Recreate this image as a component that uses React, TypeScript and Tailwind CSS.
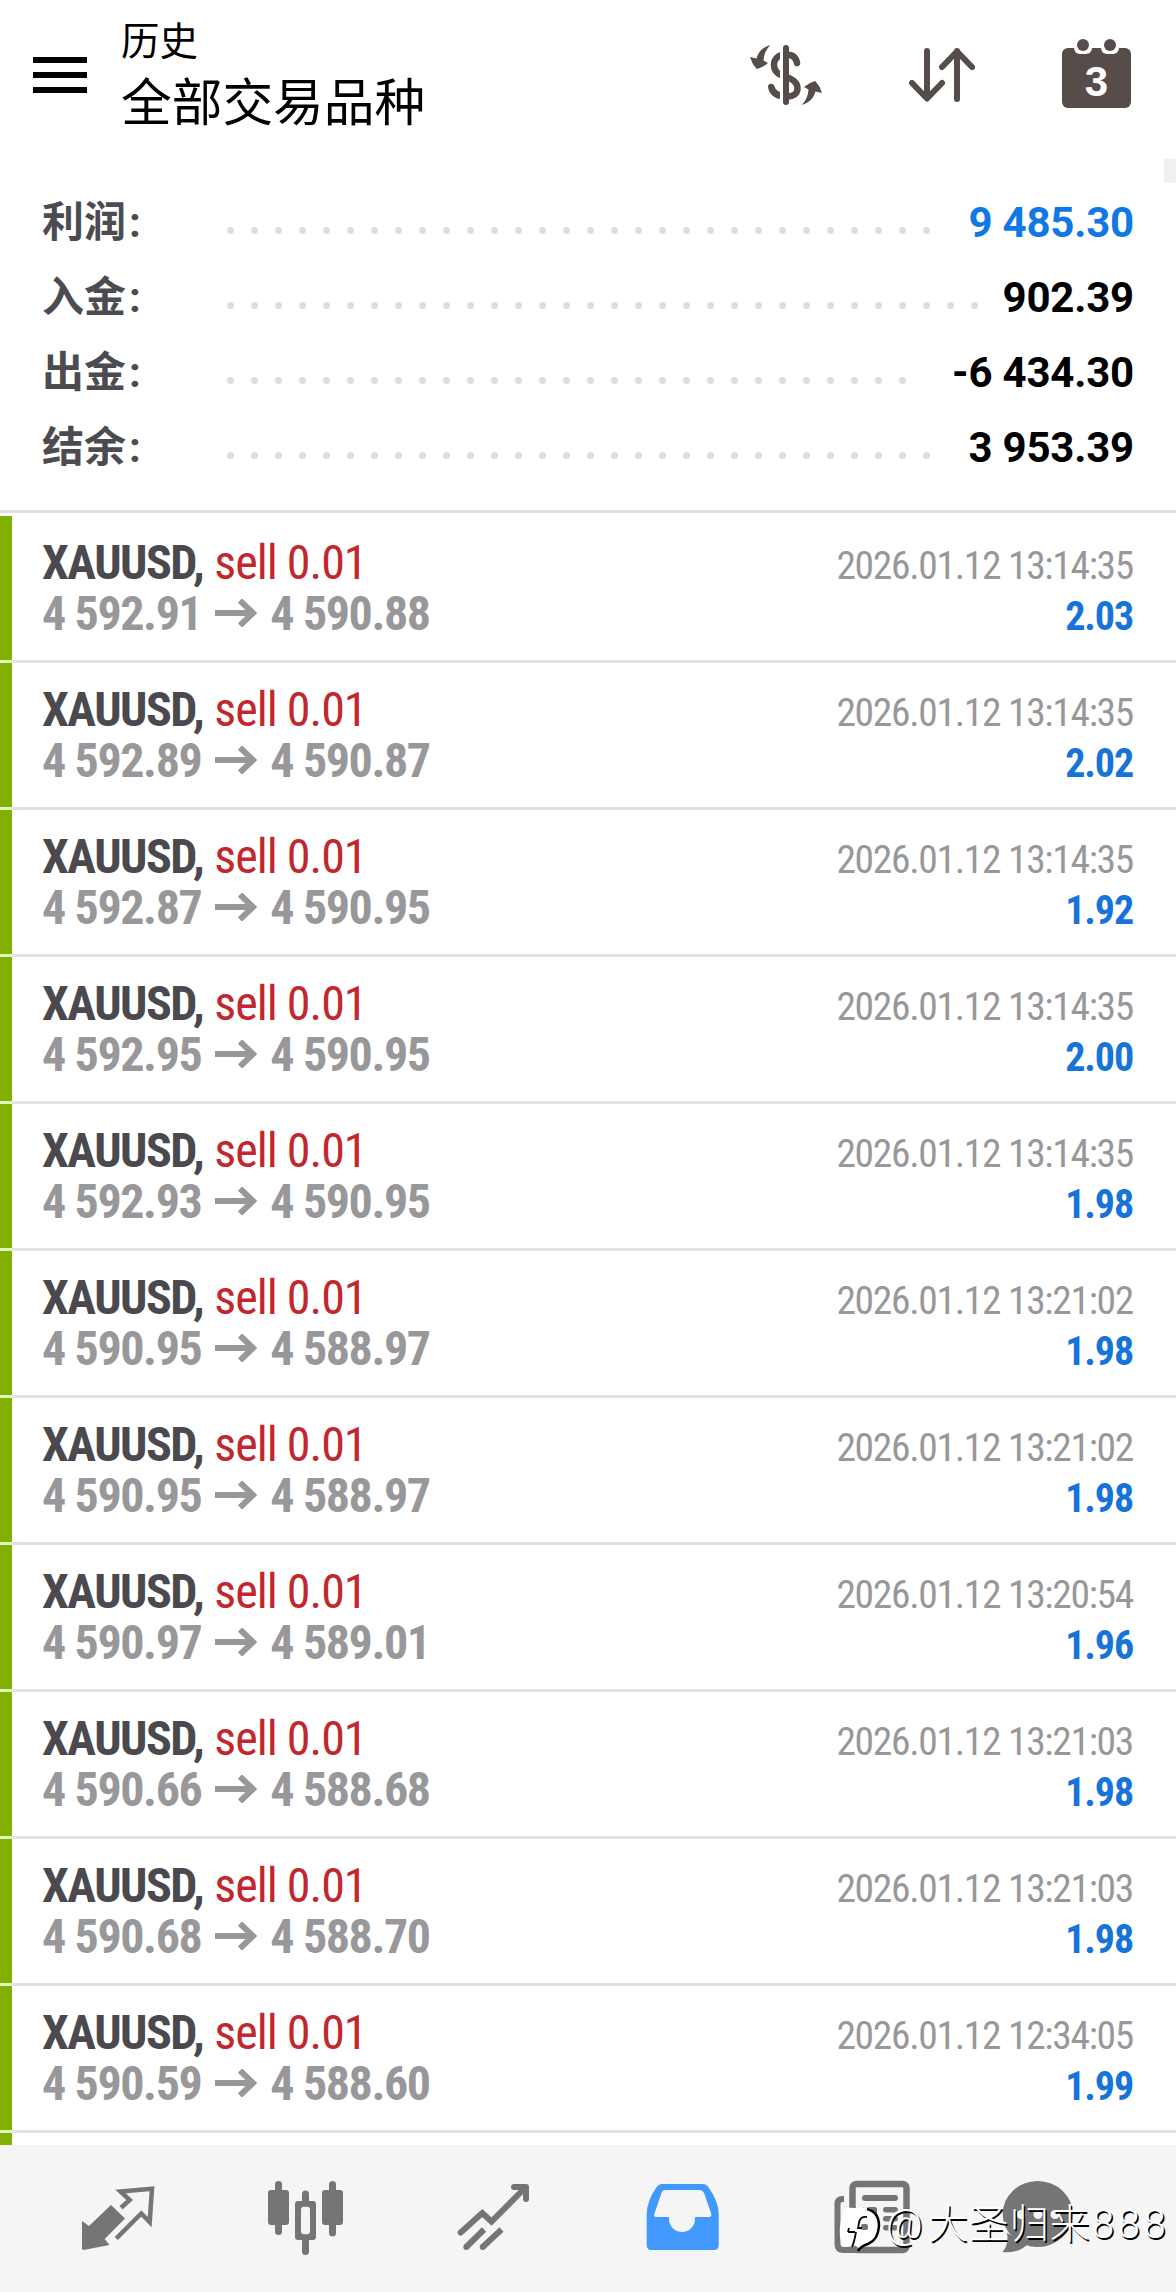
import type { ReactNode } from 'react';

interface Deal {
  open: string;
  close: string;
  time: string;
  profit: string;
}

interface SummaryItem {
  label: string;
  value: string;
  dots: number;
  valueClass: string;
}

const summary: SummaryItem[] = [
  { label: '利润', value: '9 485.30', dots: 30, valueClass: 'text-[#0f78e4]' },
  { label: '入金', value: '902.39', dots: 32, valueClass: 'text-black' },
  { label: '出金', value: '-6 434.30', dots: 29, valueClass: 'text-black' },
  { label: '结余', value: '3 953.39', dots: 30, valueClass: 'text-black' }
];

const deals: Deal[] = [
  { open: '4 592.91', close: '4 590.88', time: '2026.01.12 13:14:35', profit: '2.03' },
  { open: '4 592.89', close: '4 590.87', time: '2026.01.12 13:14:35', profit: '2.02' },
  { open: '4 592.87', close: '4 590.95', time: '2026.01.12 13:14:35', profit: '1.92' },
  { open: '4 592.95', close: '4 590.95', time: '2026.01.12 13:14:35', profit: '2.00' },
  { open: '4 592.93', close: '4 590.95', time: '2026.01.12 13:14:35', profit: '1.98' },
  { open: '4 590.95', close: '4 588.97', time: '2026.01.12 13:21:02', profit: '1.98' },
  { open: '4 590.95', close: '4 588.97', time: '2026.01.12 13:21:02', profit: '1.98' },
  { open: '4 590.97', close: '4 589.01', time: '2026.01.12 13:20:54', profit: '1.96' },
  { open: '4 590.66', close: '4 588.68', time: '2026.01.12 13:21:03', profit: '1.98' },
  { open: '4 590.68', close: '4 588.70', time: '2026.01.12 13:21:03', profit: '1.98' },
  { open: '4 590.59', close: '4 588.60', time: '2026.01.12 12:34:05', profit: '1.99' }
];

const CurrencyIcon = () => (
  <svg width="72" height="60" viewBox="0 0 72 60" fill="#564c49">
    <path
      d="M47 18C46 12 42 9.5 36 9.5C28 9.5 24 14 24 20C24 27 29 29.5 36 32C43 34 47.5 37 47.5 43.5C47.5 48 44 51.5 37 51.5C27 51.5 22.5 48 21.3 42"
      fill="none"
      stroke="#564c49"
      strokeWidth="6.5"
      strokeLinecap="round"
    />
    <rect x="30" y="2" width="5" height="56" fill="#fff" />
    <rect x="33" y="0" width="6" height="60" rx="3" />
    <path d="M20.5 0Q9 3 6.5 13.5L0 12Q2 19 6.7 24Q13 22.5 18 18L13.5 15.5Q14 6 20.5 0Z" />
    <path
      d="M20.5 0Q9 3 6.5 13.5L0 12Q2 19 6.7 24Q13 22.5 18 18L13.5 15.5Q14 6 20.5 0Z"
      transform="rotate(180 36 30)"
    />
  </svg>
);

const SortIcon = () => (
  <svg width="66" height="54" viewBox="0 0 66 54" fill="none" stroke="#564c49" strokeWidth="6" strokeLinecap="round" strokeLinejoin="round">
    <path d="M18 3V50M3 35L18 50.5L33 35" />
    <path d="M48 51V3M33 19L48 3.5L63 19" />
  </svg>
);

const CalendarIcon = () => (
  <svg width="69" height="69" viewBox="0 0 69 69" fill="#564c49">
    <rect y="9" width="69" height="60" rx="6" />
    <rect x="12" y="-3" width="18" height="18" rx="6" fill="#fff" />
    <rect x="39" y="-3" width="18" height="18" rx="6" fill="#fff" />
    <circle cx="21" cy="6" r="6" />
    <circle cx="48" cy="6" r="6" />
    <text x="34.5" y="57" textAnchor="middle" fill="#fff" fontSize="42" fontWeight="700" fontFamily="Liberation Sans, sans-serif">
      3
    </text>
  </svg>
);

const NavIcon = ({ children }: { children: ReactNode }) => (
  <button className="flex w-[188px] items-center justify-center">
    <svg width="100" height="101" viewBox="0 0 100 101" fill="#757575" className="overflow-visible">
      {children}
    </svg>
  </button>
);

const Header = () => (
  <header className="flex h-[159px] items-start pl-[33px] pr-[45px]">
    <button className="mt-[57px] flex w-[54px] flex-col gap-[9px]">
      <span className="h-[6px] w-full bg-black" />
      <span className="h-[6px] w-full bg-black" />
      <span className="h-[6px] w-full bg-black" />
    </button>
    <div className="ml-[34px] flex-1 pt-[15px] text-black">
      <p className="text-[38.5px] leading-[54px]">历史</p>
      <h1 className="pt-px text-[50.7px] leading-[68px]">全部交易品种</h1>
    </div>
    <div className="mt-[45px]">
      <CurrencyIcon />
    </div>
    <div className="ml-[87px] mt-[48px]">
      <SortIcon />
    </div>
    <div className="ml-[87px] mt-[39px]">
      <CalendarIcon />
    </div>
  </header>
);

const SummaryRow = ({ label, value, dots, valueClass }: SummaryItem) => (
  <div className="flex h-[75px] items-center">
    <span className="w-[185px] pt-[2px] text-[42px] font-bold text-[#4c4c50]">
      {label}
      <span className="ml-[3px]">:</span>
    </span>
    <div className="mt-[17px] flex flex-1 gap-[17px]">
      {Array.from({ length: dots }, (_, i) => (
        <span key={i} className="size-[7px] rounded-full bg-[#dedede]" />
      ))}
    </div>
    <span className={`pt-px text-[42px] font-bold tracking-[-0.2px] ${valueClass}`}>{value}</span>
  </div>
);

const DealRow = ({ open, close, time, profit }: Deal) => (
  <div className="flex h-[147px] border-b-[3px] border-[#e2e2e2]">
    <div className="-mb-[3px] w-[12px] border-b-[3px] border-[#e1f5bf] bg-[#80b000]" />
    <div className="flex flex-1 justify-between pl-[30px] pr-[43px] pt-[21px] font-['Roboto_Condensed','Roboto',sans-serif] [font-stretch:75%]">
      <div className="text-[48px] leading-[51px]">
        <p>
          <span className="font-bold tracking-[-1.5px] text-[#4a4a4e]">XAUUSD,</span>{' '}
          <span className="tracking-[-1px] text-[#c1272d]">sell 0.01</span>
        </p>
        <p className="flex items-center font-bold tracking-[-1.4px] text-[#98989a]">
          {open}
          <svg width="42" height="28" viewBox="0 0 42 28" fill="none" stroke="#98989a" strokeWidth="6" className="mb-[2px] ml-[14px] mr-[13px]">
            <path d="M0 14H38M25 1.5L38 14L25 26.5" />
          </svg>
          {close}
        </p>
      </div>
      <div className="pt-[3px] text-right leading-[51px]">
        <p className="text-[39.5px] tracking-[-1.3px] text-[#98989a]">{time}</p>
        <p className="text-[40px] font-bold tracking-[-1.1px] text-[#1673d9]">{profit}</p>
      </div>
    </div>
  </div>
);

const BottomNav = () => (
  <nav className="relative flex h-[147px] bg-[#f5f5f5] pl-[24px]">
    <NavIcon>
      <path d="M14 53L21 58L43 37L57 50.5L36.7 71L41.5 77L15.5 82L14 81Z" />
      <path
        d="M53 39.7L61.7 32L52.5 23.5L84 20.7L81.7 54L73.3 45.5L48.3 70.5"
        fill="none"
        stroke="#757575"
        strokeWidth="4.5"
      />
    </NavIcon>
    <NavIcon>
      <rect x="19" y="13" width="7" height="54" rx="3.5" />
      <rect x="12" y="22" width="21" height="35" rx="3" />
      <rect x="46" y="22.5" width="7" height="64.5" rx="3.5" />
      <rect x="39" y="33" width="21" height="39" rx="3" />
      <rect x="45" y="38.7" width="9" height="27.5" rx="3" fill="#f5f5f5" />
      <rect x="73" y="13" width="7" height="55.5" rx="3.5" />
      <rect x="66" y="22" width="21" height="35" rx="3" />
    </NavIcon>
    <NavIcon>
      <g fill="none" stroke="#757575" strokeWidth="6">
        <path d="M16.7 64.5L38.3 45L47.5 53.5L80 21" strokeLinecap="round" />
        <path d="M22.3 79L40 61.5M38.7 79L57.5 61.5" />
      </g>
      <circle cx="22.3" cy="79" r="3" />
      <circle cx="38.7" cy="79" r="3" />
      <path d="M70 16H82Q85 16 85 19V31A3 3 0 0 1 79 31V26L74 22H70A3 3 0 0 1 70 16Z" />
    </NavIcon>
    <NavIcon>
      <path
        fill="#4199fd"
        d="M30 16H71Q74.5 16 77 20Q86.7 34 86.7 46V77Q86.7 82 82 82H19.5Q14.7 82 14.7 77V46Q15 33 24 20Q26.5 16 30 16Z"
      />
      <path
        fill="#f5f5f5"
        d="M33 22H68Q70.5 22 72 25L79.3 46Q79.8 49 77 49H63V51A13 13 0 0 1 37 51V49H24Q21.5 49 22.3 46L29.5 25Q30.5 22 33 22Z"
      />
    </NavIcon>
    <NavIcon>
      <path d="M24 31H22.5Q17.5 31 17.5 36V76Q17.5 82 23.5 82H80" fill="none" stroke="#757575" strokeWidth="6" />
      <rect x="32.5" y="16" width="54" height="66" rx="4" fill="#f5f5f5" stroke="#757575" strokeWidth="6.5" />
      <rect x="42" y="27" width="36" height="6" rx="3" />
      <rect x="42" y="39" width="15" height="24" rx="2" />
      <rect x="63" y="39" width="15" height="5.5" rx="2.7" />
      <rect x="63" y="48" width="15" height="5.5" rx="2.7" />
      <rect x="63" y="57" width="15" height="5.5" rx="2.7" />
    </NavIcon>
    <NavIcon>
      <ellipse cx="29.7" cy="46" rx="35" ry="33" />
      <path d="M-1 65Q1 77 -5.5 84Q10 86 20 76Z" />
      <circle cx="13" cy="46.5" r="4.5" fill="#f5f5f5" />
      <circle cx="30" cy="46.5" r="4.5" fill="#f5f5f5" />
      <circle cx="47" cy="46.5" r="4.5" fill="#f5f5f5" />
    </NavIcon>
    <div className="absolute left-[838px] top-[52px] flex items-start text-[40px] leading-[56px] font-light text-white [text-shadow:1.5px_1.5px_0.5px_#000]">
      <svg width="44" height="52" viewBox="0 0 44 52" className="mt-[2px] overflow-visible">
        <path d="M8 8Q16 10 28 8Q41 11 41 26Q41 41 30 45Q24 47 21 52L19 46L14 48Q8 46 4 47Q-2 27 8 8Z" fill="#fff" />
        <rect x="23" y="25" width="7" height="6" rx="2" fill="#757575" />
        <g fill="none" stroke="#000">
          <path d="M29 10Q41 13 41 27Q40 41 30 45Q23 47 20 52" strokeWidth="2.5" />
          <path d="M14 48Q16 44 18 33M10 33H17M10 33L11 29M29 18Q22 17 21 24L20 29H24" strokeWidth="1.8" />
        </g>
      </svg>
      <span className="ml-[4px] w-[42px]">@</span>
      <span className="w-[164px] tracking-[0.6px]">大圣归来</span>
      <span className="tracking-[3.6px]">888</span>
    </div>
  </nav>
);

const App = () => {
  return (
    <div className="relative flex h-[2292px] w-[1176px] flex-col overflow-hidden bg-white font-['Roboto','Noto_Sans_CJK_SC',sans-serif]">
      <Header />
      <div className="absolute right-0 top-[159px] h-[24px] w-[12px] bg-[#f0f0f0]" />
      <section className="h-[354px] border-b-[3px] border-[#e2e2e2] pl-[42px] pr-[42px] pt-[25px]">
        {summary.map((item) => (
          <SummaryRow key={item.label} {...item} />
        ))}
      </section>
      <main className="min-h-0 flex-1 overflow-hidden pt-[3px]">
        {deals.map((deal, index) => (
          <DealRow key={index} {...deal} />
        ))}
        <div className="h-[12px] w-[12px] bg-[#80b000]" />
      </main>
      <BottomNav />
    </div>
  );
};

export default App;
